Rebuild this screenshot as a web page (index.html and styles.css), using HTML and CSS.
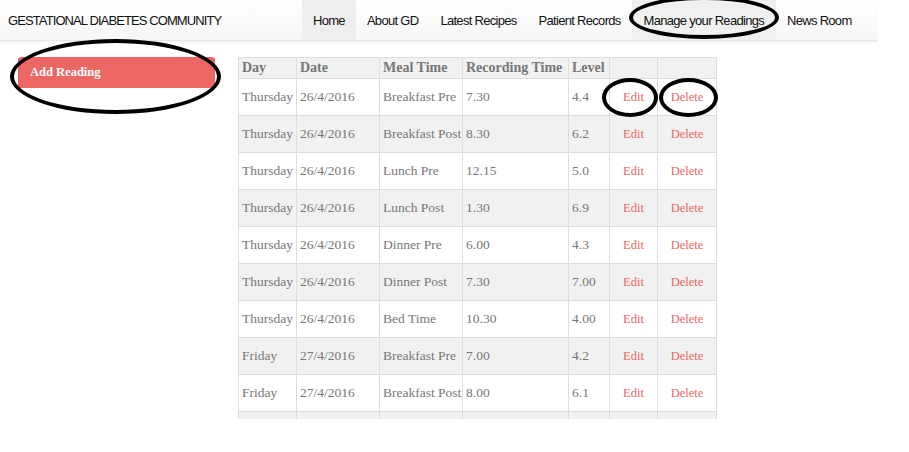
FILE: index.html
```html
<!DOCTYPE html>
<html>
<head>
<meta charset="utf-8">
<link rel="stylesheet" href="styles.css">
</head>
<body>
<header class="topbar">
  <div class="brand">GESTATIONAL DIABETES COMMUNITY</div>
  <nav class="nav">
    <a class="nav-item active">Home</a>
    <a class="nav-item">About GD</a>
    <a class="nav-item">Latest Recipes</a>
    <a class="nav-item">Patient Records</a>
    <a class="nav-item current">Manage your Readings</a>
    <a class="nav-item">News Room</a>
  </nav>
</header>
<div class="content">
  <aside class="sidebar">
    <a class="add-btn">Add Reading</a>
  </aside>
  <main class="main">
    <div class="table-wrap">
      <table class="readings">
        <colgroup>
          <col class="c-day"><col class="c-date"><col class="c-meal"><col class="c-rec"><col class="c-level"><col class="c-edit"><col class="c-del">
        </colgroup>
        <thead>
          <tr><th>Day</th><th>Date</th><th>Meal Time</th><th>Recording Time</th><th>Level</th><th></th><th></th></tr>
        </thead>
        <tbody>
          <tr><td>Thursday</td><td>26/4/2016</td><td>Breakfast Pre</td><td>7.30</td><td>4.4</td><td class="act"><a>Edit</a></td><td class="act"><a>Delete</a></td></tr>
          <tr><td>Thursday</td><td>26/4/2016</td><td>Breakfast Post</td><td>8.30</td><td>6.2</td><td class="act"><a>Edit</a></td><td class="act"><a>Delete</a></td></tr>
          <tr><td>Thursday</td><td>26/4/2016</td><td>Lunch Pre</td><td>12.15</td><td>5.0</td><td class="act"><a>Edit</a></td><td class="act"><a>Delete</a></td></tr>
          <tr><td>Thursday</td><td>26/4/2016</td><td>Lunch Post</td><td>1.30</td><td>6.9</td><td class="act"><a>Edit</a></td><td class="act"><a>Delete</a></td></tr>
          <tr><td>Thursday</td><td>26/4/2016</td><td>Dinner Pre</td><td>6.00</td><td>4.3</td><td class="act"><a>Edit</a></td><td class="act"><a>Delete</a></td></tr>
          <tr><td>Thursday</td><td>26/4/2016</td><td>Dinner Post</td><td>7.30</td><td>7.00</td><td class="act"><a>Edit</a></td><td class="act"><a>Delete</a></td></tr>
          <tr><td>Thursday</td><td>26/4/2016</td><td>Bed Time</td><td>10.30</td><td>4.00</td><td class="act"><a>Edit</a></td><td class="act"><a>Delete</a></td></tr>
          <tr><td>Friday</td><td>27/4/2016</td><td>Breakfast Pre</td><td>7.00</td><td>4.2</td><td class="act"><a>Edit</a></td><td class="act"><a>Delete</a></td></tr>
          <tr><td>Friday</td><td>27/4/2016</td><td>Breakfast Post</td><td>8.00</td><td>6.1</td><td class="act"><a>Edit</a></td><td class="act"><a>Delete</a></td></tr>
          <tr class="cut"><td></td><td></td><td></td><td></td><td></td><td></td><td></td></tr>
        </tbody>
      </table>
    </div>
  </main>
</div>
<div class="mark mark-nav"></div>
<div class="mark mark-add"></div>
<div class="mark mark-edit"></div>
<div class="mark mark-del"></div>
</body>
</html>
```
FILE: styles.css
```css
html, body {
  margin: 0;
  padding: 0;
  background: #fff;
}
body {
  width: 909px;
  height: 452px;
  overflow: hidden;
  position: relative;
}
.topbar {
  width: 877px;
  height: 40px;
  display: flex;
  align-items: stretch;
  background: linear-gradient(#ffffff, #f6f6f6);
  border-bottom: 1px solid #e6e6e6;
  box-shadow: 0 1px 2px rgba(0,0,0,0.06);
  font-family: "Liberation Sans", Arial, sans-serif;
  font-size: 13px;
  color: #111;
  white-space: nowrap;
}
.brand {
  flex-shrink: 0;
  width: 294px;
  padding-left: 8px;
  display: flex;
  align-items: center;
  font-size: 13px;
  letter-spacing: -0.9px;
}
.nav {
  display: flex;
  align-items: stretch;
}
.nav-item {
  display: flex;
  align-items: center;
  padding: 0 11px;
  color: #111;
  letter-spacing: -0.7px;
}
.nav-item.active {
  background: #eeeeee;
}
.nav-item.current {
  background: #f0f0f0;
  padding: 0 12px;
}
.content {
  display: flex;
  padding-top: 16px;
}
.sidebar {
  width: 197px;
  margin-left: 18px;
}
.add-btn {
  display: block;
  height: 31px;
  line-height: 31px;
  padding-left: 12px;
  background: #ec6763;
  border-radius: 3px 3px 0 0;
  color: #fff;
  font-family: "Liberation Serif", "Times New Roman", serif;
  font-weight: bold;
  font-size: 12.5px;
}
.main {
  margin-left: 23px;
}
.table-wrap {
  height: 362px;
  overflow: hidden;
}
.readings {
  border-collapse: collapse;
  table-layout: fixed;
  width: 478px;
  font-family: "Liberation Serif", "Times New Roman", serif;
  font-size: 13.5px;
  color: #777;
}
.c-day { width: 58px; }
.c-date { width: 83px; }
.c-meal { width: 83px; }
.c-rec { width: 106px; }
.c-level { width: 41px; }
.c-edit { width: 48px; }
.c-del { width: 59px; }
.readings th, .readings td {
  border: 1px solid #dddddd;
  text-align: left;
  padding: 0 3px;
  white-space: nowrap;
  overflow: hidden;
}
.readings th {
  height: 20px;
  background: #f1f1f1;
  font-weight: bold;
  font-size: 14px;
}
.readings td {
  height: 36px;
}
.readings tbody tr:nth-child(even) td {
  background: #f1f1f1;
}
.readings td.act {
  text-align: center;
}
.readings td.act a {
  color: #ec6763;
  font-size: 12.5px;
}
.mark {
  position: absolute;
  border: 4px solid #000;
  border-radius: 50%;
  box-sizing: border-box;
}
.mark-nav {
  left: 629px;
  top: -4px;
  width: 150px;
  height: 43px;
}
.mark-add {
  left: 10px;
  top: 39px;
  width: 211px;
  height: 75px;
}
.mark-edit {
  left: 602px;
  top: 78px;
  width: 56px;
  height: 39px;
}
.mark-del {
  left: 659px;
  top: 78px;
  width: 59px;
  height: 39px;
}
```
